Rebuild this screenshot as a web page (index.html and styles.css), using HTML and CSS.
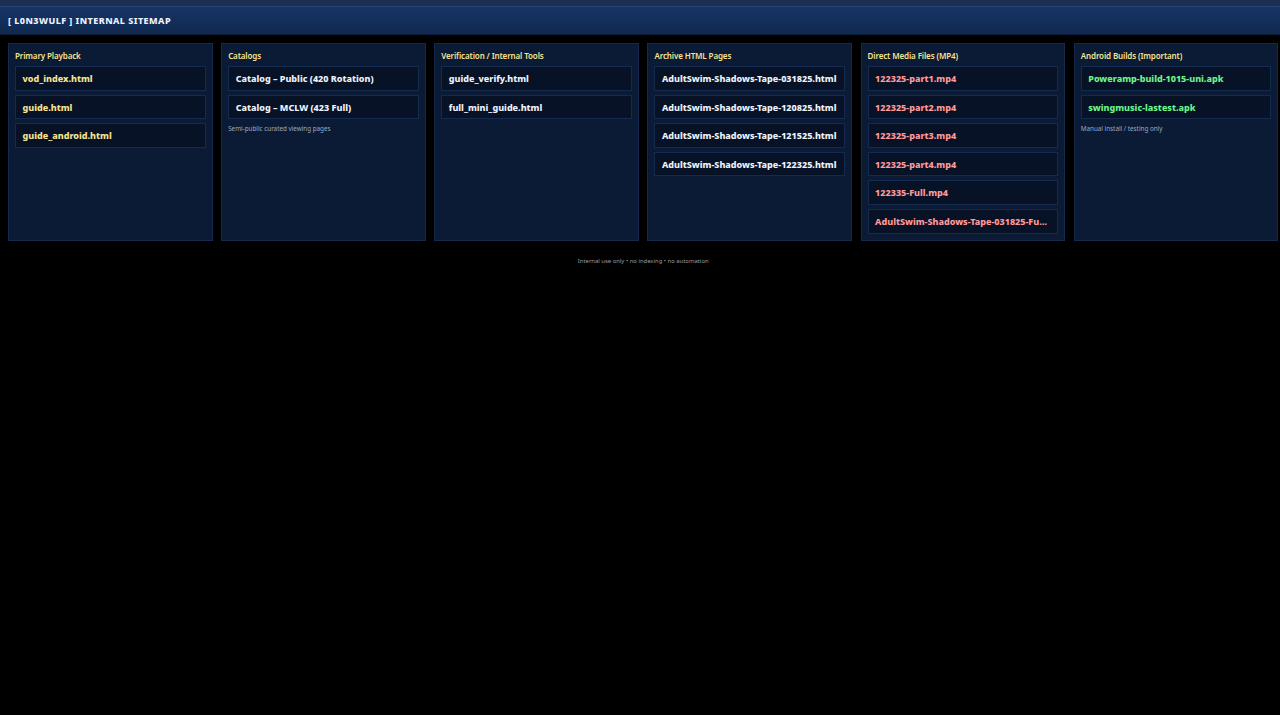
FILE: index.html
```html
<!DOCTYPE html>
<html lang="en">
<head>
<meta charset="utf-8">
<title>L0N3WULF Internal Sitemap</title>
<link rel="stylesheet" href="styles.css">
</head>
<body>
<div class="topstrip"></div>
<header class="header">[ L0N3WULF ] INTERNAL SITEMAP</header>
<main class="grid">
  <section class="panel">
    <h2 class="panel-title">Primary Playback</h2>
    <a class="link link-gold">vod_index.html</a>
    <a class="link link-gold">guide.html</a>
    <a class="link link-gold">guide_android.html</a>
  </section>
  <section class="panel">
    <h2 class="panel-title">Catalogs</h2>
    <a class="link">Catalog – Public (420 Rotation)</a>
    <a class="link">Catalog – MCLW (423 Full)</a>
    <p class="note">Semi-public curated viewing pages</p>
  </section>
  <section class="panel">
    <h2 class="panel-title">Verification / Internal Tools</h2>
    <a class="link">guide_verify.html</a>
    <a class="link">full_mini_guide.html</a>
  </section>
  <section class="panel">
    <h2 class="panel-title">Archive HTML Pages</h2>
    <a class="link">AdultSwim-Shadows-Tape-031825.html</a>
    <a class="link">AdultSwim-Shadows-Tape-120825.html</a>
    <a class="link">AdultSwim-Shadows-Tape-121525.html</a>
    <a class="link">AdultSwim-Shadows-Tape-122325.html</a>
  </section>
  <section class="panel">
    <h2 class="panel-title">Direct Media Files (MP4)</h2>
    <a class="link link-red">122325-part1.mp4</a>
    <a class="link link-red">122325-part2.mp4</a>
    <a class="link link-red">122325-part3.mp4</a>
    <a class="link link-red">122325-part4.mp4</a>
    <a class="link link-red">122335-Full.mp4</a>
    <a class="link link-red link-long">AdultSwim-Shadows-Tape-031825-Full.mp4</a>
  </section>
  <section class="panel">
    <h2 class="panel-title">Android Builds (Important)</h2>
    <a class="link link-green">Poweramp-build-1015-uni.apk</a>
    <a class="link link-green">swingmusic-lastest.apk</a>
    <p class="note">Manual install / testing only</p>
  </section>
</main>
<footer class="footer">Internal use only • no indexing • no automation</footer>
</body>
</html>
```
FILE: styles.css
```css
* { box-sizing: border-box; }
html, body { margin: 0; padding: 0; }
body {
  background: #000;
  color: #e6edf7;
  font-family: "Noto Sans", "Open Sans", sans-serif;
  min-height: 715px;
  overflow: hidden;
}
.topstrip {
  height: 7px;
  background: #1a2f52;
  border-bottom: 1px solid #29466f;
}
.header {
  height: 28px;
  padding: 0 8px;
  display: flex;
  align-items: center;
  background: linear-gradient(#163466, #10294f);
  border-bottom: 1px solid #0a1a33;
  font-family: "Noto Sans", sans-serif;
  font-size: 9px;
  font-weight: 800;
  letter-spacing: 0.45px;
  color: #eef4ff;
}
.grid {
  display: grid;
  grid-template-columns: repeat(6, 1fr);
  gap: 8.5px;
  padding: 8px 1.6px 0 8px;
}
.panel {
  padding: 6px;
  background: #0b1b35;
  border: 1px solid #14294b;
  display: flex;
  flex-direction: column;
  gap: 4px;
  min-width: 0;
}
.panel-title {
  margin: 0;
  height: 12px;
  line-height: 12px;
  font-size: 8px;
  font-weight: 600;
  letter-spacing: -0.12px;
  color: #f8e390;
}
.link {
  display: block;
  flex: none;
  height: 24.6px;
  line-height: 24px;
  padding: 0 6.5px;
  background: #071226;
  border: 1px solid #142a4e;
  font-family: "Noto Sans", sans-serif;
  font-size: 9px;
  font-weight: 800;
  color: #eef3fb;
  white-space: nowrap;
  overflow: hidden;
  text-overflow: ellipsis;
}
.link-long { padding-right: 9px; }
.link-gold { color: #f8e390; }
.link-red { color: #ff9a9a; }
.link-green { color: #6cf58c; }
.note {
  margin: 0.5px 0 0;
  font-size: 6.3px;
  line-height: 9px;
  color: #9aa9c2;
}
.footer {
  padding: 16px 1.6px 0 8px;
  text-align: center;
  font-size: 5.9px;
  line-height: 9px;
  color: #9a9ca0;
}
```
